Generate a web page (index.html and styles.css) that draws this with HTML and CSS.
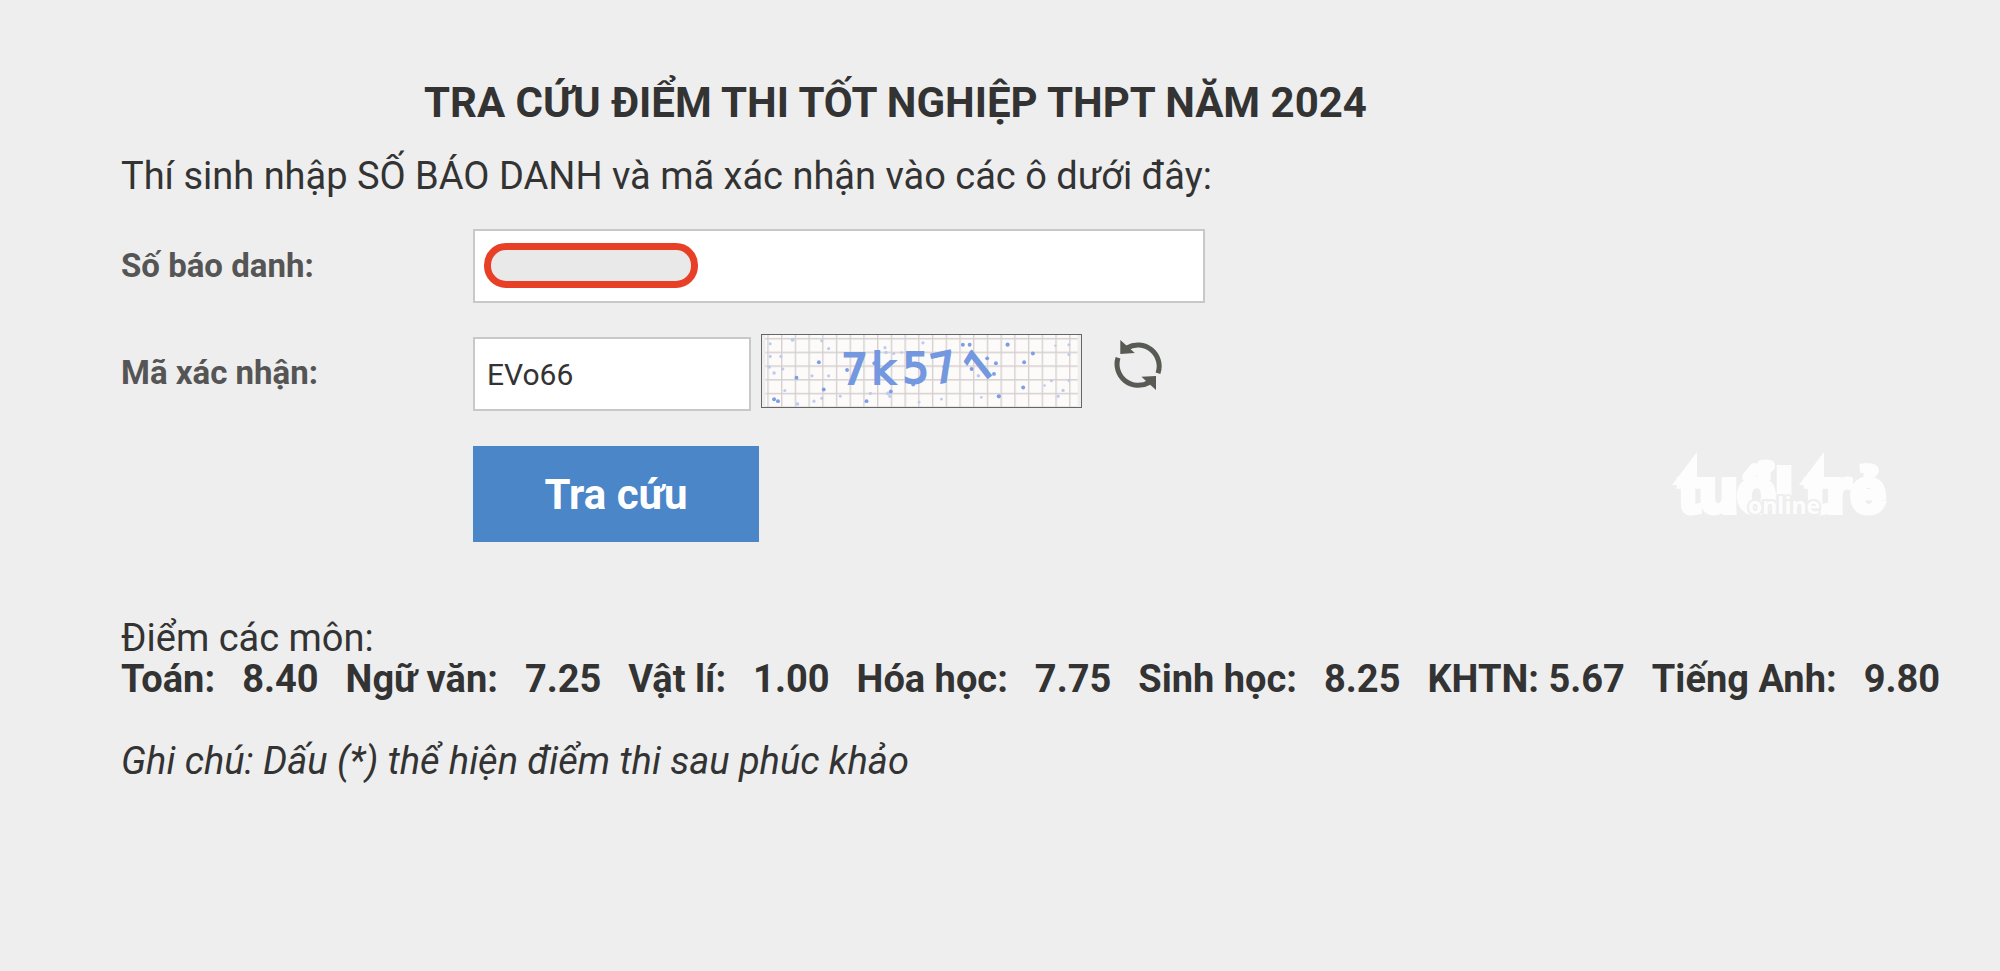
FILE: index.html
```
<!DOCTYPE html>
<html lang="vi">
<head>
    <meta charset="UTF-8">
    <meta name="viewport" content="width=device-width, initial-scale=1.0">
    <title>Tra cứu điểm thi tốt nghiệp THPT năm 2024</title>
    <link rel="stylesheet" href="styles.css">
</head>
<body>

    <main class="lookup">
        <h1 class="title">TRA CỨU ĐIỂM THI TỐT NGHIỆP THPT NĂM 2024</h1>
        <p class="intro">Thí sinh nhập SỐ BÁO DANH và mã xác nhận vào các ô dưới đây:</p>

        <!-- Lookup form -->
        <form class="lookup-form" onsubmit="return false">
            <label class="field-label" for="sbd">Số báo danh:</label>
            <div class="field">
                <input class="text-input" type="text" id="sbd">
                <span class="redacted"></span>
            </div>

            <label class="field-label" for="code">Mã xác nhận:</label>
            <div class="code-row">
                <input class="text-input code-input" type="text" id="code" value="EVo66">
                <svg class="captcha" viewBox="0 0 321 74" role="img" aria-label="Mã xác nhận">
                    <defs>
                        <pattern id="grid" x="2" y="3" width="14.1" height="14.1" patternUnits="userSpaceOnUse">
                            <path d="M.7 0V14.1M0 .7H14.1" stroke="#d6d0d0" stroke-width="1.4" fill="none"/>
                        </pattern>
                    </defs>
                    <rect width="321" height="74" fill="#fdfafa"/>
                    <rect width="321" height="74" fill="url(#grid)"/>
                    <!-- Noise -->
                    <g class="dots-light">
                        <circle cx="5" cy="9" r="1.6"/><circle cx="28" cy="5" r="2"/><circle cx="58" cy="6" r="1.6"/>
                        <circle cx="65" cy="14" r="1.6"/><circle cx="5" cy="22" r="1.6"/><circle cx="16" cy="22" r="1.6"/>
                        <circle cx="4" cy="33" r="1.8"/><circle cx="9" cy="39" r="1.8"/><circle cx="18" cy="35" r="1.6"/>
                        <circle cx="48" cy="42" r="1.6"/><circle cx="65" cy="42" r="1.6"/><circle cx="20" cy="57" r="1.6"/>
                        <circle cx="33" cy="71" r="1.8"/><circle cx="50" cy="68" r="1.6"/><circle cx="58" cy="65" r="1.6"/>
                        <circle cx="77" cy="63" r="1.5"/><circle cx="123" cy="13" r="1.6"/><circle cx="124" cy="18" r="1.8"/>
                        <circle cx="132" cy="19" r="1.6"/><circle cx="140" cy="18" r="1.4"/><circle cx="162" cy="8" r="1.7"/>
                        <circle cx="108" cy="60" r="1.6"/><circle cx="126" cy="60" r="2"/><circle cx="128" cy="63" r="1.7"/>
                        <circle cx="158" cy="69" r="1.4"/><circle cx="181" cy="66" r="1.4"/><circle cx="219" cy="42" r="1.8"/>
                        <circle cx="312" cy="10" r="1.6"/><circle cx="298" cy="11" r="1.2"/><circle cx="312" cy="20" r="1.6"/>
                        <circle cx="294" cy="47" r="1.6"/><circle cx="312" cy="47" r="1.4"/><circle cx="306" cy="57" r="1.7"/>
                        <circle cx="301" cy="63" r="1.6"/><circle cx="287" cy="52" r="1.3"/><circle cx="222" cy="64" r="1.4"/>
                    </g>
                    <g class="dots">
                        <circle cx="55" cy="28" r="2"/><circle cx="32" cy="44" r="2"/><circle cx="60" cy="56" r="2"/>
                        <circle cx="9" cy="66" r="2"/><circle cx="13" cy="68" r="2"/><circle cx="84" cy="36" r="2"/>
                        <circle cx="104" cy="68" r="2"/><circle cx="129" cy="58" r="2"/><circle cx="152" cy="51" r="2"/>
                        <circle cx="112" cy="29" r="2"/><circle cx="184" cy="33" r="2"/><circle cx="203" cy="10" r="2"/>
                        <circle cx="210" cy="10" r="2"/><circle cx="249" cy="10" r="2.2"/><circle cx="212" cy="35" r="2"/>
                        <circle cx="228" cy="24" r="2"/><circle cx="237" cy="29" r="2"/><circle cx="235" cy="40" r="2"/>
                        <circle cx="275" cy="19" r="2"/><circle cx="266" cy="28" r="2"/><circle cx="265" cy="54" r="2"/>
                        <circle cx="240" cy="63" r="2.2"/>
                    </g>
                    <g class="captcha-text">
                        <text x="78" y="50" font-size="43">7</text>
                        <text x="109" y="50" font-size="43">k</text>
                        <text x="141" y="49" font-size="43">5</text>
                        <text x="170" y="48" font-size="42" transform="rotate(-12 184 33)">7</text>
                        <text class="captcha-one" x="208" y="47" font-size="45" transform="rotate(-38 220 33)">1</text>
                    </g>
                </svg>
                <button class="refresh" type="button" aria-label="Đổi mã">
                    <svg viewBox="0 0 48 50" width="48" height="50">
                        <path d="M13 8A21.3 21.3 0 0 1 44 33.3M4 17.7A21.3 21.3 0 0 0 35 42.5" fill="none" stroke="#585a54" stroke-width="5"/>
                        <path d="M6.3 0V14L20.8 13ZM42 50V36L27.4 36.8Z" fill="#585a54"/>
                    </svg>
                </button>
            </div>

            <button class="submit" type="submit">Tra cứu</button>
        </form>

        <!-- Scores -->
        <section class="results">
            <p>Điểm các môn:</p>
            <p class="scores">
                <span>Toán:</span> <span>8.40</span>
                <span>Ngữ văn:</span> <span>7.25</span>
                <span>Vật lí:</span> <span>1.00</span>
                <span>Hóa học:</span> <span>7.75</span>
                <span>Sinh học:</span> <span>8.25</span>
                <span>KHTN: 5.67</span>
                <span>Tiếng Anh:</span> <span>9.80</span>
            </p>
            <p class="note">Ghi chú: Dấu (*) thể hiện điểm thi sau phúc khảo</p>
        </section>
    </main>

    <!-- Watermark -->
    <svg class="watermark" viewBox="0 0 220 70" role="img" aria-label="tuổi trẻ online">
        <path d="M0 34L25 1V34ZM127 34L152 1V34Z" fill="#fdfdfd"/>
        <g class="brand">
            <text x="7" y="61">tuổi</text>
            <text x="134" y="61">trẻ</text>
        </g>
        <text class="brand-sub" x="76" y="63">online</text>
    </svg>

</body>
</html>
```
FILE: styles.css
```
* {
    margin: 0;
    padding: 0;
    box-sizing: border-box;
}

body {
    position: relative;
    min-height: 100vh;
    background: #eeeeee;
    color: #333;
    font-family: Roboto, "Liberation Sans", sans-serif;
    font-size: 38px;
    line-height: 41px;
    overflow-x: hidden;
}

.lookup {
    max-width: 1670px;
    padding: 76px 0 75px 121px;
}

.title {
    font-size: 42px;
    line-height: 54px;
    font-weight: 700;
    text-align: center;
}

.intro {
    margin-top: 22px;
    line-height: 48px;
}

/* Form */
.lookup-form {
    display: grid;
    grid-template-columns: 352px 1fr;
    row-gap: 31px;
    margin-top: 29px;
}

.field-label {
    align-self: center;
    color: #555;
    font-size: 33px;
    line-height: 72px;
    font-weight: 700;
}

.field {
    position: relative;
    width: 100%;
    max-width: 732px;
}

.text-input {
    display: block;
    width: 100%;
    height: 74px;
    padding: 0 12px;
    border: 2px solid #c8c8c8;
    background: #fff;
    color: #333;
    font-family: inherit;
    font-size: 30px;
}

.redacted {
    position: absolute;
    left: 11px;
    top: 14px;
    width: 214px;
    height: 45px;
    border: 7px solid #e84026;
    border-radius: 22px;
    background: #e9e9e9;
}

.code-row {
    display: flex;
    align-items: flex-start;
}

.code-input {
    width: 278px;
    margin-top: 3px;
}

/* Captcha */
.captcha {
    width: 321px;
    height: 74px;
    margin-left: 10px;
    border: 1px solid #666;
}

.dots {
    fill: #7c9fe4;
}

.dots-light {
    fill: #bccbee;
}

.captcha-text {
    fill: #7398df;
    stroke: #7398df;
    stroke-width: 2;
    font-family: "DejaVu Sans", sans-serif;
}

.captcha-one {
    font-family: Roboto, sans-serif;
}

.refresh {
    margin: 6px 0 0 32px;
    border: none;
    background: none;
    cursor: pointer;
}

.refresh svg {
    display: block;
}

.submit {
    grid-column: 2;
    justify-self: start;
    width: 286px;
    height: 96px;
    margin-top: 4px;
    border: none;
    background: #4a86c8;
    color: #fff;
    font-family: inherit;
    font-size: 42px;
    font-weight: 700;
    cursor: pointer;
}

/* Results */
.results {
    margin-top: 76px;
    white-space: nowrap;
}

.scores {
    display: flex;
    gap: 27px;
    font-weight: 700;
}

.note {
    margin-top: 41px;
    font-style: italic;
}

/* Watermark */
.watermark {
    position: absolute;
    right: 108px;
    top: 451px;
    width: 220px;
    height: 70px;
    overflow: visible;
}

.brand {
    fill: #fdfdfd;
    stroke: #fdfdfd;
    stroke-width: 6;
    font-family: "Liberation Sans", sans-serif;
    font-size: 62px;
    font-weight: 700;
}

.brand-sub {
    fill: #fdfdfd;
    stroke: #eeeeee;
    stroke-width: 4;
    paint-order: stroke;
    font-family: "Open Sans", sans-serif;
    font-size: 23px;
    font-weight: 700;
}
```
